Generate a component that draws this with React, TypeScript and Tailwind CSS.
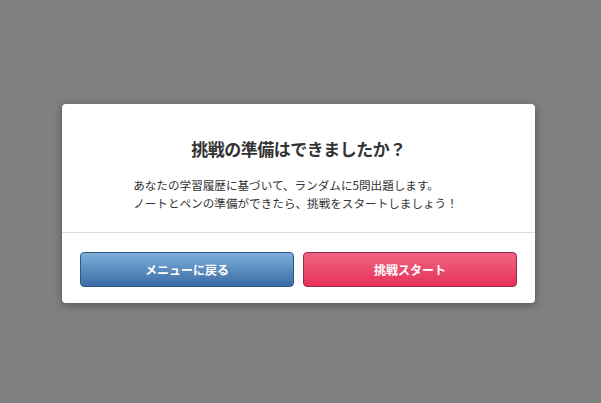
export default function App() {
  return (
    <div
      className="w-[601px] h-[403px] bg-[#808080] flex items-start pl-[62px] pt-[104px]"
      style={{ fontFamily: '"Noto Sans CJK JP", "Noto Sans", sans-serif' }}
    >
      <div className="w-[473px] h-[199px] bg-white rounded-[4px] shadow-[0_2px_8px_rgba(0,0,0,0.35)] flex flex-col">
        {/* 本文 */}
        <div className="pt-[33px] pb-[20px] border-b border-[#dcdcdc]">
          <h2 className="text-center text-[17px] leading-[24px] tracking-[-0.5px] font-bold text-[#333]">
            挑戦の準備はできましたか？
          </h2>
          <div className="pr-[6px]">
            <div className="mt-[15px] mx-auto w-fit text-left text-[11.6px] leading-[18px] text-[#333]">
              <p>あなたの学習履歴に基づいて、ランダムに5問出題します。</p>
              <p>ノートとペンの準備ができたら、挑戦をスタートしましょう！</p>
            </div>
          </div>
        </div>

        {/* ボタン */}
        <div className="flex gap-[9px] px-[18px] pt-[19px]">
          <button className="flex-1 h-[35px] rounded-[4px] border border-[#2d5a80] bg-gradient-to-b from-[#7eafd9] to-[#3c6ca6] text-white text-[12px] font-bold">
            メニューに戻る
          </button>
          <button className="flex-1 h-[35px] rounded-[4px] border border-[#9a2a48] bg-gradient-to-b from-[#ef6382] to-[#e62f58] text-white text-[12px] font-bold">
            挑戦スタート
          </button>
        </div>
      </div>
    </div>
  );
}
